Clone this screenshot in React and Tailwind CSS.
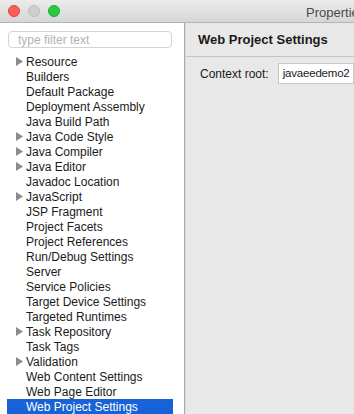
import React from 'react';

const items = [
  { label: 'Resource', arrow: true },
  { label: 'Builders' },
  { label: 'Default Package' },
  { label: 'Deployment Assembly' },
  { label: 'Java Build Path' },
  { label: 'Java Code Style', arrow: true },
  { label: 'Java Compiler', arrow: true },
  { label: 'Java Editor', arrow: true },
  { label: 'Javadoc Location' },
  { label: 'JavaScript', arrow: true },
  { label: 'JSP Fragment' },
  { label: 'Project Facets' },
  { label: 'Project References' },
  { label: 'Run/Debug Settings' },
  { label: 'Server' },
  { label: 'Service Policies' },
  { label: 'Target Device Settings' },
  { label: 'Targeted Runtimes' },
  { label: 'Task Repository', arrow: true },
  { label: 'Task Tags' },
  { label: 'Validation', arrow: true },
  { label: 'Web Content Settings' },
  { label: 'Web Page Editor' },
  { label: 'Web Project Settings', selected: true },
];

const Arrow = ({ selected }) => (
  <svg width="7" height="9" viewBox="0 0 7 9" className="shrink-0">
    <path d="M0 0 L7 4.5 L0 9 Z" fill={selected ? '#ffffff' : '#8c8c8c'} />
  </svg>
);

export default function App() {
  return (
    <div className="w-[354px] h-[414px] overflow-hidden flex flex-col bg-white text-[12px] text-[#1a1a1a] font-['Liberation_Sans',Arial,sans-serif]">
      {/* Title bar */}
      <div className="h-[23px] shrink-0 flex items-center bg-gradient-to-b from-[#ececec] to-[#d6d6d6] border-b border-[#b4b4b4] relative overflow-hidden">
        <div className="flex items-center gap-[8px] pl-[8px]">
          <span className="w-[12px] h-[12px] rounded-full bg-[#fc5f57] border border-[#e0443e]" />
          <span className="w-[12px] h-[12px] rounded-full bg-[#cfcfcf] border border-[#bdbdbd]" />
          <span className="w-[12px] h-[12px] rounded-full bg-[#2ac93f] border border-[#1aab29]" />
        </div>
        <span className="absolute left-[306px] top-[3px] text-[13px] text-[#4a4a4a] whitespace-nowrap">Properties for javaeedemo2</span>
      </div>

      <div className="flex flex-1 min-h-0">
        {/* Left tree */}
        <div className="w-[185px] shrink-0 bg-white border-r border-[#a9a9a9] flex flex-col">
          <div className="mt-[8px] ml-[8px] w-[164px] h-[17px] rounded-[4px] border border-[#d4d4d4] flex items-center pl-[9px] text-[#b3b3b3]">
            type filter text
          </div>
          <div className="mt-[6px] flex flex-col">
            {items.map((it) => (
              <div
                key={it.label}
                className={`h-[15px] ml-[7px] w-[166px] flex items-center whitespace-nowrap ${it.selected ? 'bg-[#1762d6] text-white' : ''}`}
              >
                <div className="w-[19px] flex justify-end pr-[3px]">
                  {it.arrow && <Arrow selected={it.selected} />}
                </div>
                <span>{it.label}</span>
              </div>
            ))}
          </div>
        </div>

        {/* Right pane */}
        <div className="flex-1 bg-[#e8e8e8] border-l border-[#dcdcdc] flex flex-col">
          <div className="h-[34px] flex items-center pl-[12px] border-b border-[#c4c4c4] font-bold text-[13px] text-[#1a1a1a] whitespace-nowrap">
            Web Project Settings
          </div>
          <div className="flex items-center mt-[6px] pl-[14px] whitespace-nowrap">
            <span className="text-[12px]">Context root:</span>
            <div className="ml-[9px] h-[21px] flex-1 bg-white border border-[#c8c8c8] flex items-center pl-[4px] text-[11.5px] tracking-[-0.2px]">
              javaeedemo2
            </div>
          </div>
        </div>
      </div>
    </div>
  );
}
